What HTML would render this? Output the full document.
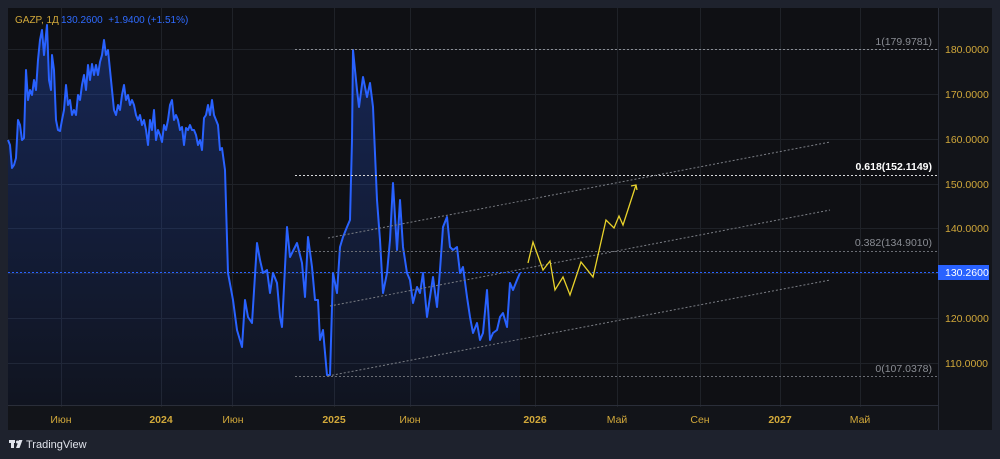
<!DOCTYPE html>
<html><head><meta charset="utf-8"><style>
html,body{margin:0;padding:0;background:#1e222d;width:1000px;height:459px;overflow:hidden}
svg text{font-family:"Liberation Sans",sans-serif}
</style></head><body>
<svg width="1000" height="459" viewBox="0 0 1000 459" xmlns="http://www.w3.org/2000/svg">
<defs>
<linearGradient id="g" x1="0" y1="0" x2="0" y2="1">
<stop offset="0" stop-color="#2962ff" stop-opacity="0.28"/>
<stop offset="1" stop-color="#2962ff" stop-opacity="0.05"/>
</linearGradient>
</defs>
<rect x="0" y="0" width="1000" height="459" fill="#1e222d"/>
<rect x="8" y="8" width="984" height="422" fill="#0f1014"/>
<rect x="8" y="405" width="930" height="25" fill="#121419"/>
<rect x="938" y="8" width="54" height="422" fill="#121419"/>
<g stroke="#1f2228" stroke-width="1">
<line x1="8" y1="49.5" x2="938" y2="49.5"/><line x1="8" y1="94.5" x2="938" y2="94.5"/>
<line x1="8" y1="139.5" x2="938" y2="139.5"/><line x1="8" y1="184.5" x2="938" y2="184.5"/>
<line x1="8" y1="228.5" x2="938" y2="228.5"/><line x1="8" y1="273.5" x2="938" y2="273.5"/>
<line x1="8" y1="318.5" x2="938" y2="318.5"/><line x1="8" y1="363.5" x2="938" y2="363.5"/>
<line x1="61.5" y1="8" x2="61.5" y2="407"/><line x1="161.5" y1="8" x2="161.5" y2="407"/>
<line x1="232.5" y1="8" x2="232.5" y2="407"/><line x1="334.5" y1="8" x2="334.5" y2="407"/>
<line x1="410.5" y1="8" x2="410.5" y2="407"/><line x1="535.5" y1="8" x2="535.5" y2="407"/>
<line x1="617.5" y1="8" x2="617.5" y2="407"/><line x1="700.5" y1="8" x2="700.5" y2="407"/>
<line x1="780.5" y1="8" x2="780.5" y2="407"/><line x1="860.5" y1="8" x2="860.5" y2="407"/>
</g>
<line x1="8" y1="405.5" x2="938" y2="405.5" stroke="#2a2e39"/>
<line x1="938.5" y1="8" x2="938.5" y2="430" stroke="#2a2e39"/>
<polygon fill="url(#g)" points="8,405 8,140 10,145 12,168 14,165 16,158 18,120 20,125 22,140 24,138 26,70 28,100 30,90 32,95 34,80 36,90 38,60 40,40 42,30 44,55 45,45 47,25 49,80 51,90 52,55 54,70 56,120 58,130 60,131 62,120 64,110 66,85 68,105 70,100 72,115 74,110 76,115 78,95 80,100 82,85 84,75 86,90 88,65 90,80 92,64 94,75 96,65 98,75 100,62 102,55 104,40 106,55 108,50 110,70 112,90 114,110 116,115 118,105 120,110 122,95 124,85 126,100 128,95 130,105 132,100 134,105 136,115 138,120 140,115 142,125 144,120 146,130 148,145 150,120 152,130 154,110 156,140 158,130 160,135 162,142 164,125 166,130 168,120 170,105 172,100 174,120 176,115 178,120 180,130 182,127 184,145 186,128 188,130 190,125 192,130 194,130 196,135 198,145 200,140 202,150 204,118 206,115 208,105 210,115 212,100 214,115 216,120 218,125 220,150 222,148 225,170 228,273 233,300 237,330 242,347 245,300 248,317 252,323 257,243 260,260 263,273 267,270 270,293 273,273 277,283 280,317 282,327 287,227 290,257 297,243 302,263 305,297 308,237 312,267 315,300 318,300 320,340 323,330 327,375 330,375 333,273 337,293 340,247 343,237 347,227 350,220 352,140 353,50 357,90 359,107 363,77 367,97 370,83 373,107 377,200 380,240 383,293 387,273 390,240 393,183 397,250 400,200 403,247 407,273 410,280 413,303 417,287 420,293 423,273 427,317 430,297 433,277 437,307 440,270 443,227 447,217 450,247 453,250 457,247 460,273 463,267 467,297 470,317 473,333 477,323 480,340 483,333 487,290 490,340 493,333 497,330 500,317 503,313 507,327 510,283 513,290 517,280 520,273 520,405"/>
<polyline fill="none" stroke="#2962ff" stroke-width="2" stroke-linejoin="round" points="8,140 10,145 12,168 14,165 16,158 18,120 20,125 22,140 24,138 26,70 28,100 30,90 32,95 34,80 36,90 38,60 40,40 42,30 44,55 45,45 47,25 49,80 51,90 52,55 54,70 56,120 58,130 60,131 62,120 64,110 66,85 68,105 70,100 72,115 74,110 76,115 78,95 80,100 82,85 84,75 86,90 88,65 90,80 92,64 94,75 96,65 98,75 100,62 102,55 104,40 106,55 108,50 110,70 112,90 114,110 116,115 118,105 120,110 122,95 124,85 126,100 128,95 130,105 132,100 134,105 136,115 138,120 140,115 142,125 144,120 146,130 148,145 150,120 152,130 154,110 156,140 158,130 160,135 162,142 164,125 166,130 168,120 170,105 172,100 174,120 176,115 178,120 180,130 182,127 184,145 186,128 188,130 190,125 192,130 194,130 196,135 198,145 200,140 202,150 204,118 206,115 208,105 210,115 212,100 214,115 216,120 218,125 220,150 222,148 225,170 228,273 233,300 237,330 242,347 245,300 248,317 252,323 257,243 260,260 263,273 267,270 270,293 273,273 277,283 280,317 282,327 287,227 290,257 297,243 302,263 305,297 308,237 312,267 315,300 318,300 320,340 323,330 327,375 330,375 333,273 337,293 340,247 343,237 347,227 350,220 352,140 353,50 357,90 359,107 363,77 367,97 370,83 373,107 377,200 380,240 383,293 387,273 390,240 393,183 397,250 400,200 403,247 407,273 410,280 413,303 417,287 420,293 423,273 427,317 430,297 433,277 437,307 440,270 443,227 447,217 450,247 453,250 457,247 460,273 463,267 467,297 470,317 473,333 477,323 480,340 483,333 487,290 490,340 493,333 497,330 500,317 503,313 507,327 510,283 513,290 517,280 520,273"/>
<g stroke-dasharray="2,2" stroke-width="1" fill="none">
<line x1="295" y1="49.5" x2="938" y2="49.5" stroke="#8a8d94"/>
<line x1="295" y1="175.5" x2="938" y2="175.5" stroke="#d8d9dc"/>
<line x1="295" y1="251.5" x2="938" y2="251.5" stroke="#6a6d74"/>
<line x1="295" y1="376.5" x2="938" y2="376.5" stroke="#6a6d74"/>
<line x1="328" y1="238" x2="830" y2="142" stroke="#7a7d84"/>
<line x1="330" y1="306" x2="830" y2="210" stroke="#7a7d84"/>
<line x1="328" y1="376" x2="830" y2="280" stroke="#7a7d84"/>
<line x1="8" y1="272.5" x2="938" y2="272.5" stroke="#2962ff"/>
</g>
<polyline fill="none" stroke="#e8d22b" stroke-width="1.3" points="528,263 533,242 543,270 550,261 555,290 563,277 570,295 581,262 593,277 606,220 614,228 619,216 623,225 636,185"/>
<polyline fill="none" stroke="#e8d22b" stroke-width="1.3" points="631,186 636,185 637,190"/>
<g font-size="10.5" text-anchor="end">
<text x="932" y="45" fill="#8a8d94">1(179.9781)</text>
<text x="932" y="170" fill="#ffffff" font-weight="bold">0.618(152.1149)</text>
<text x="932" y="246" fill="#8a8d94">0.382(134.9010)</text>
<text x="932" y="372" fill="#8a8d94">0(107.0378)</text>
</g>
<g font-size="10.5" fill="#d1a83a">
<text x="945" y="53">180.0000</text><text x="945" y="98">170.0000</text>
<text x="945" y="143">160.0000</text><text x="945" y="188">150.0000</text>
<text x="945" y="232">140.0000</text><text x="945" y="322">120.0000</text>
<text x="945" y="367">110.0000</text>
</g>
<rect x="938" y="265" width="51" height="15" fill="#2962ff"/>
<text x="945" y="276" font-size="10.5" fill="#ffffff">130.2600</text>
<g font-size="10.5" fill="#d1a83a" text-anchor="middle">
<text x="61" y="423">Июн</text><text x="161" y="423" font-weight="bold">2024</text>
<text x="233" y="423">Июн</text><text x="334" y="423" font-weight="bold">2025</text>
<text x="410" y="423">Июн</text><text x="535" y="423" font-weight="bold">2026</text>
<text x="617" y="423">Май</text><text x="700" y="423">Сен</text>
<text x="780" y="423" font-weight="bold">2027</text><text x="860" y="423">Май</text>
</g>
<text x="15" y="23" font-size="10" fill="#d1a83a">GAZP, 1Д</text>
<text x="61" y="23" font-size="10" fill="#2f6bff" xml:space="preserve">130.2600  +1.9400 (+1.51%)</text>
<g fill="#e0e3eb">
<rect x="9" y="440" width="6" height="3"/><rect x="11" y="440" width="3" height="8"/>
<circle cx="17.5" cy="442" r="1.5"/><polygon points="19,440 22.5,440 19.5,448 16,448"/>
</g>
<text x="26" y="448" font-size="11" fill="#e0e3eb">TradingView</text>
</svg>
</body></html>
